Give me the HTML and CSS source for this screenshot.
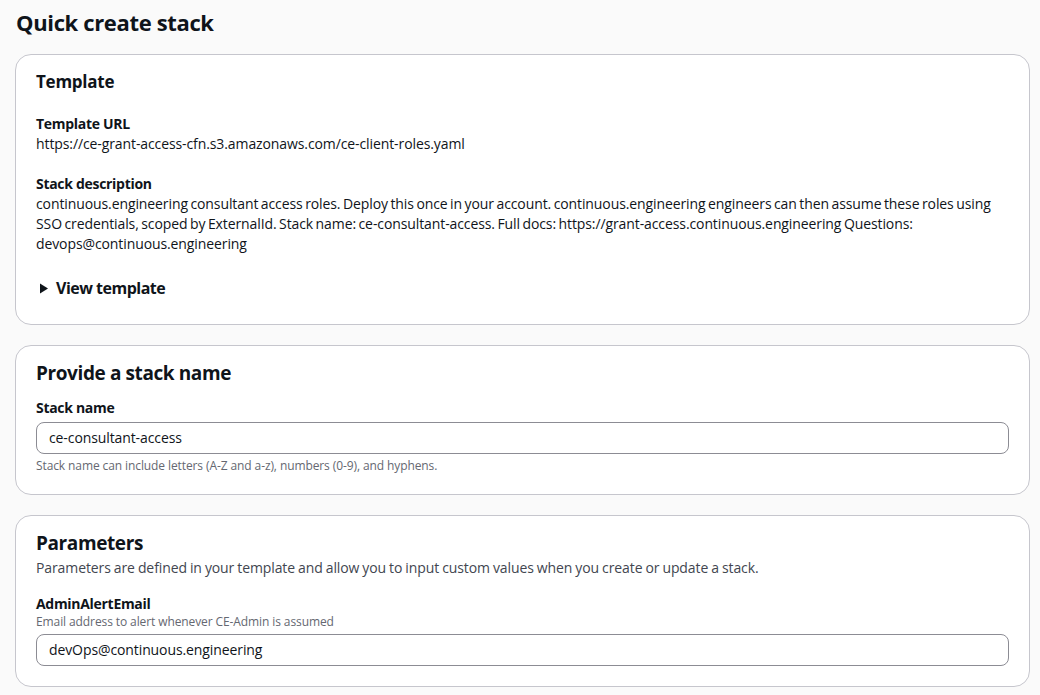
FILE: index.html
```html
<!DOCTYPE html>
<html lang="en">
<head>
<meta charset="utf-8">
<title>Quick create stack</title>
<link rel="stylesheet" href="styles.css">
</head>
<body>
<main class="page">
  <h1 class="page-title">Quick create stack</h1>

  <section class="card card-template">
    <h3 class="card-title card-title-sm">Template</h3>
    <div class="field-block">
      <div class="label">Template URL</div>
      <div class="value">https://ce-grant-access-cfn.s3.amazonaws.com/ce-client-roles.yaml</div>
    </div>
    <div class="field-block">
      <div class="label">Stack description</div>
      <div class="value prose">continuous.engineering consultant access roles. Deploy this once in your account. continuous.engineering engineers can then assume these roles using SSO credentials, scoped by ExternalId. Stack name: ce-consultant-access. Full docs: https://grant-access.continuous.engineering Questions: devops@continuous.engineering</div>
    </div>
    <div class="expander">
      <svg class="caret" width="10" height="11" viewBox="0 0 10 11"><polygon points="1,0.5 9,5.5 1,10.5" fill="#0f141a"/></svg>
      <span>View template</span>
    </div>
  </section>

  <section class="card">
    <h2 class="card-title">Provide a stack name</h2>
    <div class="form-field">
      <div class="label">Stack name</div>
      <div class="input">ce-consultant-access</div>
      <div class="hint">Stack name can include letters (A-Z and a-z), numbers (0-9), and hyphens.</div>
    </div>
  </section>

  <section class="card">
    <h2 class="card-title">Parameters</h2>
    <p class="card-desc">Parameters are defined in your template and allow you to input custom values when you create or update a stack.</p>
    <div class="form-field">
      <div class="label">AdminAlertEmail</div>
      <div class="hint hint-top">Email address to alert whenever CE-Admin is assumed</div>
      <div class="input">devOps@continuous.engineering</div>
    </div>
  </section>
</main>
</body>
</html>
```

FILE: styles.css
```css
* { box-sizing: border-box; }
html, body { margin: 0; padding: 0; }
body {
  background: #fafafa;
  font-family: "Open Sans", "Noto Sans", Arial, sans-serif;
  font-size: 14px;
  line-height: 20px;
  letter-spacing: -0.1px;
  color: #0f141a;
}
.page {
  padding: 6px 10px 0 15px;
  display: flex;
  flex-direction: column;
  gap: 20px;
}
.page-title {
  margin: 0 0 -4px 1px;
  font-size: 22px;
  line-height: 32px;
  font-weight: 700;
  letter-spacing: -0.35px;
}
.card {
  background: #fff;
  border: 1px solid #c6c6cd;
  border-radius: 16px;
  padding: 15px 20px 20px;
}
.card-template { padding-bottom: 26px; }
.card-title {
  margin: 0;
  font-size: 19px;
  line-height: 24px;
  font-weight: 700;
  letter-spacing: -0.4px;
}
.card-title-sm { font-size: 17px; letter-spacing: -0.25px; }
.prose { word-spacing: -1px; }
.card-desc {
  margin: 3px 0 0;
  color: #424650;
  word-spacing: -0.5px;
}
.field-block { margin-top: 20px; }
.label { font-weight: 700; letter-spacing: -0.3px; }
.value { color: #0f141a; }
.expander {
  margin-top: 24px;
  display: flex;
  align-items: center;
  gap: 7px;
  font-size: 16px;
  font-weight: 700;
  letter-spacing: -0.5px;
  padding-left: 3px;
}
.form-field { margin-top: 13px; }
.card-desc + .form-field { margin-top: 16px; }
.input {
  margin-top: 4px;
  height: 32px;
  border: 1px solid #8c8c94;
  border-radius: 8px;
  padding: 5px 12px;
  font-size: 14px;
  line-height: 20px;
}
.hint {
  margin-top: 4px;
  font-size: 12px;
  line-height: 16px;
  color: #656871;
}
.hint-top { margin-top: 0; margin-bottom: 0; }
```
